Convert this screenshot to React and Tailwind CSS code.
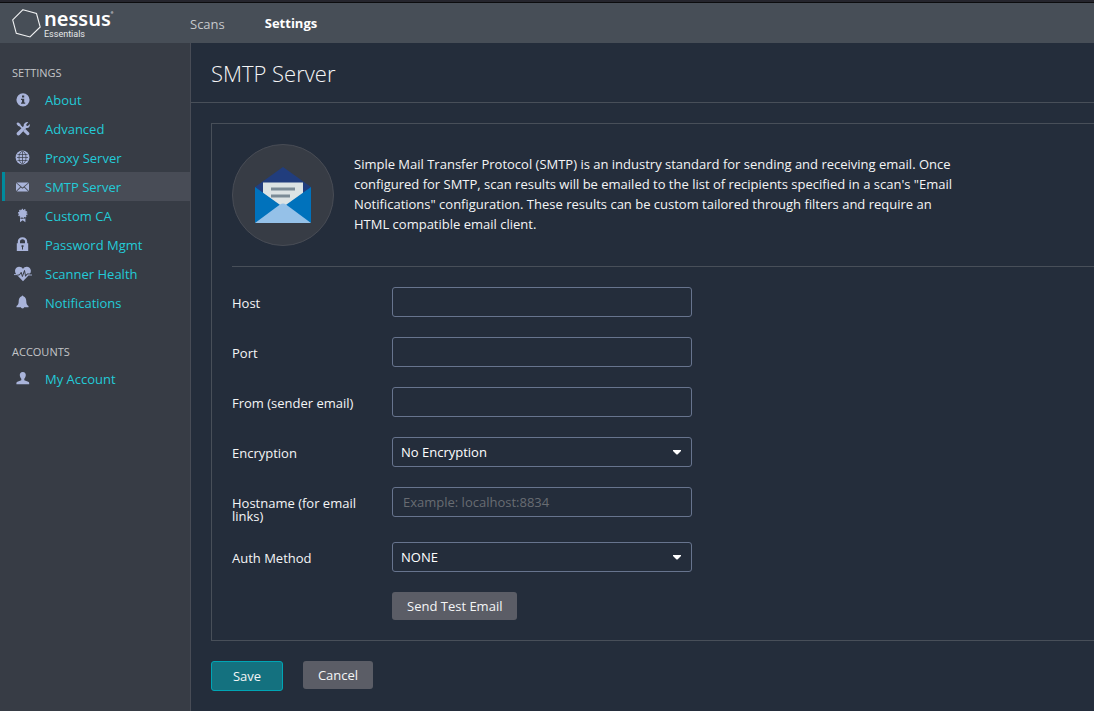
import React from "react";

function Icon({ name }) {
  const shapes = {
    info: (
      <path
        fillRule="evenodd"
        d="M8 1.200a6.600 6.600 0 1 0 0 13.200 6.600 6.600 0 0 0 0-13.200zM7 3.500h2.200v2H7zM6 6.700h3.200v3.800h1v1.200H6v-1.200h1V7.900H6z"
      />
    ),
    tools: (
      <g>
        <path d="M1.400 2.800 2.900 1.300l2.500 1.600.2 1.200 2.500 2.500-1.200 1.200-2.600-2.500-1.100-.2zM9 9.200l1.500-1.100 3.700 3.700c.9 1.500-.9 3.100-2.200 2.200L8.300 10.400z" />
        <path d="M9.900 2c1-.9 2.300-1.100 3.300-.8l-2 2.200.3 1.300 1.300.3 2-2c.5 2.400-1.100 4.500-3.500 4L4.600 14c-1.500 1.400-4-1-2.600-2.600L8.800 5c-.3-1.200.1-2.200 1.100-3z" />
      </g>
    ),
    globe: (
      <g>
        <circle cx="7.500" cy="7.500" r="6.900" />
        <g fill="none" stroke="#373c45" strokeWidth=".7">
          <ellipse cx="7.500" cy="7.500" rx="3.500" ry="6.200" />
          <path d="M7.500 1.500v12M2 7.500h11M2.500 4.500h10M2.500 10.500h10" />
        </g>
      </g>
    ),
    mail: (
      <g>
        <path d="M1.500 3.500h12L7.500 8.400z" />
        <path d="M1 4.100 5.300 7.800 1 12zM14 4.100 9.700 7.800l4.300 4.200zM5.900 8.400 7.500 9.700l1.600-1.300 4.200 4.100H1.700z" />
      </g>
    ),
    badge: (
      <g>
        <circle cx="7.700" cy="5.600" r="3.900" />
        <circle cx="7.700" cy="5.600" r="4.200" fill="none" stroke="#a9b4da" strokeWidth="1.200" strokeDasharray="1.400 1.200" />
        <path d="M5 10.300c1.700.9 3.700.9 5.400 0v4L7.700 12.300 5 14.300z" />
      </g>
    ),
    lock: (
      <path
        fillRule="evenodd"
        d="M2.800 6.200V4.600C2.800 2 4.800.3 7.500.3S12.200 2 12.200 4.600v1.600h1V14H1.800V6.200zm2.200 0h5V4.600c0-1.400-1-2.300-2.500-2.300S5 3.200 5 4.600zM6.500 8.300v1.500l.5.500v2.100h1v-2.100l.5-.5V8.300z"
      />
    ),
    heart: (
      <g>
        <path d="M8 3C9.500-.2 15.500-.2 15.900 4.700c0 1.300-.4 2.300-1 3.200L8 15.200 1 7.900C.4 7 0 6 0 4.700.4-.2 6.500-.2 8 3z" />
        <path d="M-.5 9h4.900l1.800-2.700 1.200 4.200 2.100-6 1.100 5.800L12 8h4.500" fill="none" stroke="#373c45" strokeWidth="1" />
        <path d="M-1 8.600h3.500M13.500 9H17" fill="none" stroke="#a9b4da" strokeWidth=".9" />
      </g>
    ),
    bell: (
      <path d="M6.700 1.300c.2-1 1.400-1 1.600 0 2.200.6 3 2.800 3 5 0 2.500.7 3.700 2.200 4.800v1.100H9.100c-.2 1.600-3 1.600-3.200 0H1.500v-1.100c1.500-1.100 2.200-2.300 2.200-4.800 0-2.200.8-4.400 3-5z" />
    ),
    user: (
      <path d="M7.800 1c2.200 0 3 1.500 3 3.100 0 1.500-.7 2.900-1.500 3.700v1.500l3.900 1.500c.7.300 1 .8 1 1.500v.9H1.400v-.9c0-.7.3-1.200 1-1.500l3.900-1.500V7.800C5.500 7 4.800 5.600 4.800 4.100 4.800 2.500 5.600 1 7.800 1z" />
    ),
  };
  return (
    <svg viewBox="0 0 16 16" aria-hidden="true" className="h-4 w-4 shrink-0 overflow-visible" fill="#a9b4da">
      {shapes[name]}
    </svg>
  );
}

function NavItem({ icon, label, active }) {
  return (
    <li>
      <a
        href="#"
        aria-current={active ? "page" : undefined}
        className={
          "ml-[2px] flex h-[29px] items-center gap-[14px] border-l-3 pl-[10px] text-[13px] text-[#23cbd8] " +
          (active ? "border-[#008a9d] bg-[#484c56]" : "border-transparent")
        }
      >
        <Icon name={icon} />
        <span className="pt-[2px]">{label}</span>
      </a>
    </li>
  );
}

function NavGroup({ title, items }) {
  return (
    <section>
      <h2 className="px-3 text-[11px] leading-6 text-[#c3c5c8]">{title}</h2>
      <ul>
        {items.map((item) => (
          <NavItem key={item.label} {...item} />
        ))}
      </ul>
    </section>
  );
}

const field =
  "h-[30px] w-[300px] rounded-[3px] border border-[#67748e] bg-transparent text-[13px] text-white outline-none";

function Row({ id, label, children }) {
  return (
    <div className="flex items-start">
      <label htmlFor={id} className="-mb-px w-40 shrink-0 pr-5 pt-[10px] text-[13px] leading-[13px]">
        {label}
      </label>
      {children}
    </div>
  );
}

function TextRow({ id, label, placeholder }) {
  return (
    <Row id={id} label={label}>
      <input id={id} type="text" placeholder={placeholder} className={field + " px-[10px] placeholder:text-[#686c72]"} />
    </Row>
  );
}

function SelectRow({ id, label, options }) {
  return (
    <Row id={id} label={label}>
      <div className="relative">
        <select id={id} className={field + " appearance-none px-2 pt-[2px]"}>
          {options.map((option) => (
            <option key={option} className="bg-[#242d3b]">
              {option}
            </option>
          ))}
        </select>
        <svg
          viewBox="0 0 8 5"
          aria-hidden="true"
          className="pointer-events-none absolute right-[11px] top-[13px] h-[5px] w-2"
          fill="#fff"
        >
          <path d="M0 0h8v1L4.500 4.600h-1L0 1z" />
        </svg>
      </div>
    </Row>
  );
}

function Envelope() {
  return (
    <div className="flex h-[102px] w-[102px] shrink-0 items-center justify-center rounded-full border border-[#484c55] bg-[#373c45]">
      <svg viewBox="0 0 56 56" aria-hidden="true" className="h-14 w-14">
        <path d="M0 20 28 0l28 20v16H0z" fill="#213d7d" />
        <path d="M8 15.500h40V40H8z" fill="#dce3e4" />
        <path d="M16 20.500h24v3H16zM16 27.500h19v3H16z" fill="#7b8b96" />
        <path d="M0 20 28 40 0 56zM56 20 28 40l28 16z" fill="#0072bc" />
        <path d="M0 56 25 37.500q3-2 6 0L56 56z" fill="#95c1e8" />
      </svg>
    </div>
  );
}

export default function App() {
  return (
    <div className="flex min-h-screen flex-col overflow-x-hidden bg-[#242d3b] font-['Open_Sans','Noto_Sans',sans-serif] text-[13px] text-[#f4f5f6]">
      <div className="h-[3px] shrink-0 border-b border-[#0c0c0e] bg-[#25252d]" />
      <header className="flex h-10 shrink-0 items-center bg-[#474e57]">
        <a href="#" aria-label="Nessus Essentials" className="flex w-[190px] shrink-0 items-center gap-[3px] pl-3">
          <svg viewBox="0 0 29 29" aria-hidden="true" className="h-[29px] w-[29px]" fill="none" stroke="#f1f2f3" strokeWidth="1.100">
            <path d="M11 .700 24.500 4.500l3.700 13.500-10.200 10L4.300 24.300.700 10.800z" />
          </svg>
          <span className="flex flex-col pt-[3px] text-white">
            <span className="flex items-start font-['Noto_Sans','Open_Sans',sans-serif] text-[20px] font-semibold leading-5">
              nessus<span className="text-[3px] leading-[8px]">®</span>
            </span>
            <span className="font-[Roboto,sans-serif] text-[9px] leading-[11px] text-[#e6e8ea]">Essentials</span>
          </span>
        </a>
        <nav className="flex items-center gap-10">
          <a href="#" className="pt-1 text-[#c6c9cc]">Scans</a>
          <a href="#" className="pt-[2px] font-bold text-white" aria-current="page">Settings</a>
        </nav>
      </header>
      <div className="flex grow">
        <aside className="flex w-[191px] shrink-0 flex-col gap-[23px] border-r border-[#484c56] bg-[#373c45] pt-[18px]">
          <NavGroup
            title="SETTINGS"
            items={[
              { icon: "info", label: "About" },
              { icon: "tools", label: "Advanced" },
              { icon: "globe", label: "Proxy Server" },
              { icon: "mail", label: "SMTP Server", active: true },
              { icon: "badge", label: "Custom CA" },
              { icon: "lock", label: "Password Mgmt" },
              { icon: "heart", label: "Scanner Health" },
              { icon: "bell", label: "Notifications" },
            ]}
          />
          <NavGroup title="ACCOUNTS" items={[{ icon: "user", label: "My Account" }]} />
        </aside>
        <main className="min-w-0 grow">
          <h1 className="flex h-[60px] items-center border-b border-[#484f59] px-5 pt-[2px] text-[22px] font-light">SMTP Server</h1>
          <form className="pb-5 pl-5 pt-5" onSubmit={(e) => e.preventDefault()}>
            <div className="border border-r-0 border-[#484f59] py-5 pl-5">
              <div className="flex gap-5 border-b border-[#484f59] pb-5">
                <Envelope />
                <p className="max-w-[600px] pt-[10px] leading-5">
                  Simple Mail Transfer Protocol (SMTP) is an industry standard for sending and receiving email. Once
                  configured for SMTP, scan results will be emailed to the list of recipients specified in a scan's
                  "Email Notifications" configuration. These results can be custom tailored through filters and require
                  an HTML compatible email client.
                </p>
              </div>
              <div className="flex flex-col gap-5 pt-5">
                <TextRow id="host" label="Host" />
                <TextRow id="port" label="Port" />
                <TextRow id="from" label="From (sender email)" />
                <SelectRow id="encryption" label="Encryption" options={["No Encryption", "Use TLS if available", "Force SSL", "Force TLS"]} />
                <TextRow id="hostname" label="Hostname (for email links)" placeholder="Example: localhost:8834" />
                <SelectRow id="auth" label="Auth Method" options={["NONE", "PLAIN", "LOGIN", "NTLM", "CRAM-MD5"]} />
                <button type="button" className="ml-40 h-7 self-start rounded-[3px] bg-[#5b5d66] px-[15px] pt-[2px]">
                  Send Test Email
                </button>
              </div>
            </div>
            <div className="flex items-start gap-5 pt-5">
              <button type="submit" className="h-[30px] w-[72px] rounded-[3px] border border-[#00a5b5] bg-[#14717f] pt-[2px]">
                Save
              </button>
              <button type="button" className="h-7 w-[70px] rounded-[3px] bg-[#5b5d66] pt-[2px]">
                Cancel
              </button>
            </div>
          </form>
        </main>
      </div>
    </div>
  );
}
